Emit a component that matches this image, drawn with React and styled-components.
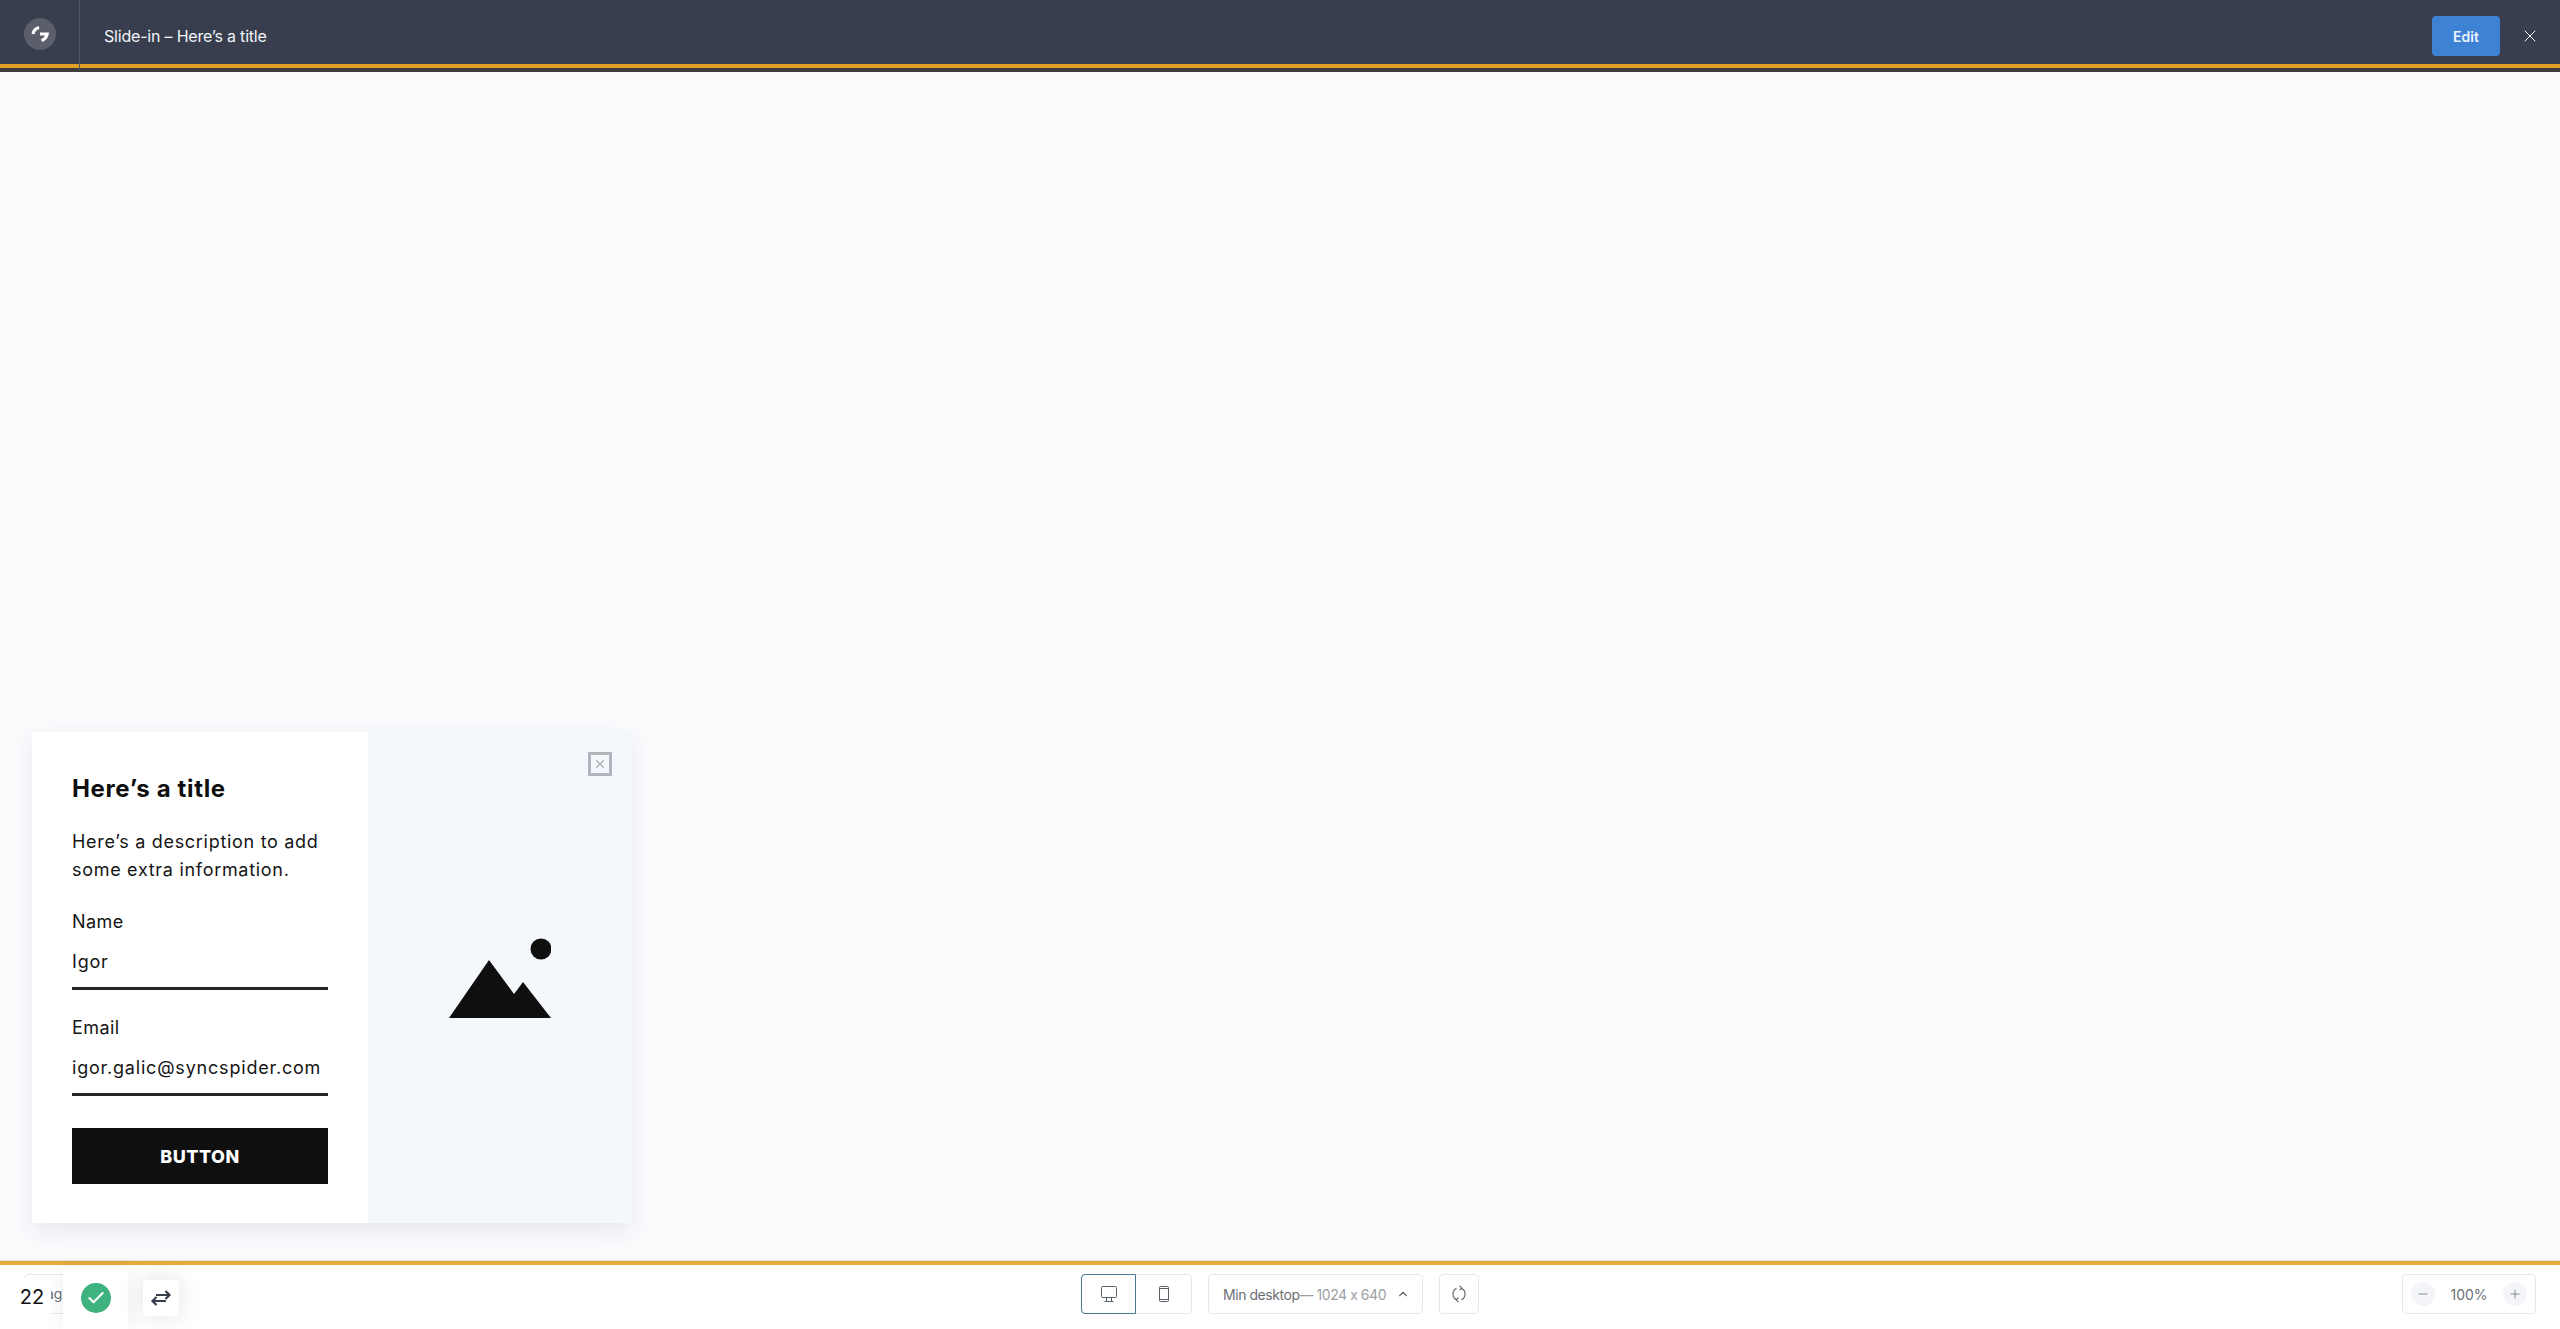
import React from 'react';
import styled, { createGlobalStyle } from 'styled-components';
import { X, ChevronUp, Minus, Plus, Check } from 'lucide-react';

const Global = createGlobalStyle`
  html, body { margin: 0; padding: 0; height: 100%; }
  body { font-family: Inter, "Liberation Sans", sans-serif; background: #fbfcfe; overflow: hidden; }
  * { box-sizing: border-box; }
`;

const Page = styled.div`
  height: 1329px;
  display: flex;
  flex-direction: column;
  position: relative;
`;

const Header = styled.header`
  height: 72px;
  flex: none;
  background: #383e4d;
  display: flex;
  border-bottom: 4px solid #3d3d3d;
`;

const HeaderInner = styled.div`
  flex: 1;
  height: 68px;
  border-bottom: 4px solid #e39f26;
  display: flex;
  align-items: center;
  padding: 8px 20px 0 0;
`;

const LogoCell = styled.div`
  width: 80px;
  height: 72px;
  margin: -8px 0 -4px;
  flex: none;
  display: flex;
  align-items: center;
  justify-content: center;
  border-right: 1px solid #50566a;
`;

const Logo = styled.div`
  width: 32px;
  height: 32px;
  border-radius: 50%;
  background: #5a5f6b;
  display: flex;
`;

const Title = styled.div`
  margin-left: 24px;
  flex: 1;
  color: #f1f4f8;
  font-size: 16px;
  letter-spacing: -0.2px;
`;

const EditButton = styled.button`
  width: 68px;
  height: 40px;
  border: 0;
  border-radius: 4px;
  background: #3e82d4;
  color: #eaf4ff;
  font: 600 14px Inter, sans-serif;
`;

const CloseBtn = styled.div`
  margin-left: 20px;
  width: 20px;
  display: flex;
  color: #f1f4f8;
`;

const Canvas = styled.main`
  flex: 1;
  display: flex;
  align-items: flex-end;
  padding: 0 0 37px 32px;
  border-bottom: 1px solid #dbe6e8;
`;

const Card = styled.section`
  width: 600px;
  height: 491px;
  display: flex;
  box-shadow: 0 8px 24px rgba(40, 50, 70, 0.1);
`;

const FormPane = styled.div`
  width: 336px;
  background: #fff;
  padding: 42px 40px 0;
  color: #151515;
`;

const CardTitle = styled.h2`
  margin: 0 0 24px;
  font-size: 24px;
  line-height: 30px;
  font-weight: 700;
  letter-spacing: 0.65px;
  color: #0f0f0f;
`;

const Description = styled.p`
  margin: 0 0 24px;
  font-size: 18px;
  line-height: 28px;
  letter-spacing: 0.7px;
`;

const Field = styled.div`
  & + & {
    margin-top: 24px;
  }
`;

const Label = styled.div`
  font-size: 18px;
  line-height: 28px;
  letter-spacing: 0.4px;
  margin-bottom: 12px;
`;

const Value = styled.div`
  height: 42px;
  font-size: 18px;
  line-height: 28px;
  letter-spacing: 0.8px;
  border-bottom: 3px solid #262626;
  white-space: nowrap;
`;

const CardButton = styled.button`
  width: 256px;
  height: 56px;
  margin-top: 32px;
  border: 0;
  background: #0f0f0f;
  color: #fff;
  letter-spacing: 0.5px;
  font: 800 18px Inter, sans-serif;
`;

const ImagePane = styled.div`
  flex: 1;
  position: relative;
  background: #f4f7fb;
  display: flex;
  align-items: center;
  justify-content: center;
`;

const CloseBox = styled.div`
  position: absolute;
  top: 20px;
  right: 20px;
  width: 24px;
  height: 24px;
  border: 3px solid #b0b5bb;
  display: flex;
  align-items: center;
  justify-content: center;
  color: #b0b5bb;
`;

const Footer = styled.footer`
  height: 68px;
  flex: none;
  background: #fff;
  border-top: 4px solid #e6ab3c;
  display: flex;
  align-items: flex-start;
  justify-content: center;
  padding-top: 9px;
  position: relative;
`;

const Center = styled.div`
  display: flex;
  gap: 16px;
`;

const Group = styled.div`
  height: 40px;
  display: flex;
  border: 1px solid #e4e8ec;
  border-radius: 4px;
  background: #fff;
`;

const DeviceGroup = styled(Group)`
  width: 111px;
`;

const DeviceBtn = styled.div`
  flex: 1;
  margin: -1px 0 -1px ${p => (p.$active ? '-1px' : '0')};
  display: flex;
  align-items: center;
  justify-content: center;
  color: #5a6068;
  border-radius: 4px 0 0 4px;
  border: 1px solid ${p => (p.$active ? '#4a7a94' : 'transparent')};
`;

const SelectBox = styled(Group)`
  width: 215px;
  align-items: center;
  padding: 0 12px 0 14px;
  font-size: 14px;
  letter-spacing: -0.45px;
  color: #6a6f76;
  justify-content: space-between;
`;

const Muted = styled.span`
  color: #9a9fa6;
`;

const IconBox = styled(Group)`
  width: 40px;
  align-items: center;
  justify-content: center;
  color: #5a6068;
`;

const ZoomGroup = styled(Group)`
  position: absolute;
  right: 24px;
  top: 9px;
  width: 134px;
  align-items: center;
  justify-content: space-between;
  padding: 0 8px;
  font-size: 14px;
  color: #6a6f76;
`;

const ZoomBtn = styled.div`
  width: 24px;
  height: 24px;
  border-radius: 50%;
  background: #f3f5f8;
  display: flex;
  align-items: center;
  justify-content: center;
  color: #5a6068;
`;

const PageInput = styled.div`
  position: absolute;
  left: 24px;
  top: 9px;
  width: 60px;
  height: 40px;
  border: 1px solid #e4e8ec;
  border-radius: 4px;
  padding-left: 12px;
  font-size: 14px;
  line-height: 38px;
  color: #6a6f76;
`;

const CountTile = styled.div`
  position: absolute;
  left: 13px;
  top: 13px;
  width: 38px;
  height: 38px;
  border-radius: 4px;
  background: #fff;
  color: #111;
  font: 20px/38px Inter, sans-serif;
  text-align: center;
`;

const CheckTile = styled.div`
  position: absolute;
  left: 63px;
  top: 2px;
  width: 65px;
  height: 62px;
  border-radius: 6px 6px 0 0;
  background: #fff;
  box-shadow: 0 0 20px rgba(0, 0, 0, 0.07);
  display: flex;
  align-items: center;
  justify-content: center;
`;

const CheckCircle = styled.div`
  width: 30px;
  height: 30px;
  border-radius: 50%;
  background: #3fb27f;
  color: #fff;
  display: flex;
  align-items: center;
  justify-content: center;
`;

const SwapTile = styled.div`
  position: absolute;
  left: 143px;
  top: 15px;
  width: 36px;
  height: 36px;
  border-radius: 4px;
  background: #fff;
  box-shadow: 0 0 24px rgba(0, 0, 0, 0.12);
  display: flex;
  align-items: center;
  justify-content: center;
`;

const LogoMark = () => (
  <svg width="32" height="32" viewBox="0 0 32 32" fill="none">
    <path d="M9 16 C9.5 12.5 11.5 10.5 15 9.5" stroke="#fff" strokeWidth="3" />
    <path d="M16 14.5 H25 C24.5 19 22.5 22.5 18 24 L17 21 C19 20.5 20.3 19.2 20.8 17.5 H16 Z" fill="#fff" />
  </svg>
);

const DesktopIcon = () => (
  <svg width="18" height="18" viewBox="0 0 18 18" fill="none" stroke="currentColor" strokeWidth="1">
    <rect x="1.5" y="1.5" width="15" height="11" rx="1" />
    <path d="M6.5 12.5 V16.5 M11.5 12.5 V16.5 M4.5 16.5 H13.5" />
  </svg>
);

const PhoneIcon = () => (
  <svg width="18" height="18" viewBox="0 0 18 18" fill="none" stroke="currentColor" strokeWidth="1">
    <rect x="4.5" y="1.5" width="9" height="15" rx="1" />
    <path d="M4.5 3.5 H13.5 M4.5 14.5 H13.5" />
  </svg>
);

const ReloadIcon = () => (
  <svg width="18" height="18" viewBox="0 0 18 18" fill="none" stroke="currentColor" strokeWidth="1.1">
    <path d="M6.5 3.2 A6.5 6.5 0 0 0 6.5 14.8 M11.5 3.2 A6.5 6.5 0 0 1 11.5 14.8" />
    <path d="M9.5 0.8 L12 3.2 L9.5 5 M8.5 12.8 L6 14.8 L8.5 17.2" />
  </svg>
);

export default function App() {
  return (
    <Page>
      <Global />
      <Header>
        <HeaderInner>
          <LogoCell>
            <Logo><LogoMark /></Logo>
          </LogoCell>
          <Title>Slide-in – Here’s a title</Title>
          <EditButton>Edit</EditButton>
          <CloseBtn><X size={20} strokeWidth={1.2} /></CloseBtn>
        </HeaderInner>
      </Header>
      <Canvas>
        <Card>
          <FormPane>
            <CardTitle>Here’s a title</CardTitle>
            <Description>Here’s a description to add some extra information.</Description>
            <Field>
              <Label>Name</Label>
              <Value>Igor</Value>
            </Field>
            <Field>
              <Label>Email</Label>
              <Value>igor.galic@syncspider.com</Value>
            </Field>
            <CardButton>BUTTON</CardButton>
          </FormPane>
          <ImagePane>
            <CloseBox><X size={14} strokeWidth={2.5} /></CloseBox>
            <svg width="102" height="80" viewBox="0 0 102 80" fill="#0f0f0f">
              <circle cx="92" cy="11" r="10.5" />
              <path d="M0 80 L40 22 L65 56 L74 44 L102 80 Z" />
            </svg>
          </ImagePane>
        </Card>
      </Canvas>
      <Footer>
        <PageInput>Page</PageInput>
        <CountTile>22</CountTile>
        <CheckTile>
          <CheckCircle><Check size={20} strokeWidth={2.5} /></CheckCircle>
        </CheckTile>
        <SwapTile>
          <svg width="22" height="18" viewBox="0 0 22 18" fill="none" stroke="#383e4d" strokeWidth="2.2">
            <path d="M6 6 H19 M15.5 2 L19.5 6 L15.5 10 M16 12 H3 M6.5 8 L2.5 12 L6.5 16" />
          </svg>
        </SwapTile>
        <Center>
          <DeviceGroup>
            <DeviceBtn $active><DesktopIcon /></DeviceBtn>
            <DeviceBtn><PhoneIcon /></DeviceBtn>
          </DeviceGroup>
          <SelectBox>
            <span>Min desktop<Muted>— 1024 x 640</Muted></span>
            <ChevronUp size={14} />
          </SelectBox>
          <IconBox><ReloadIcon /></IconBox>
        </Center>
        <ZoomGroup>
          <ZoomBtn><Minus size={14} strokeWidth={1.2} /></ZoomBtn>
          100%
          <ZoomBtn><Plus size={14} strokeWidth={1.2} /></ZoomBtn>
        </ZoomGroup>
      </Footer>
    </Page>
  );
}
